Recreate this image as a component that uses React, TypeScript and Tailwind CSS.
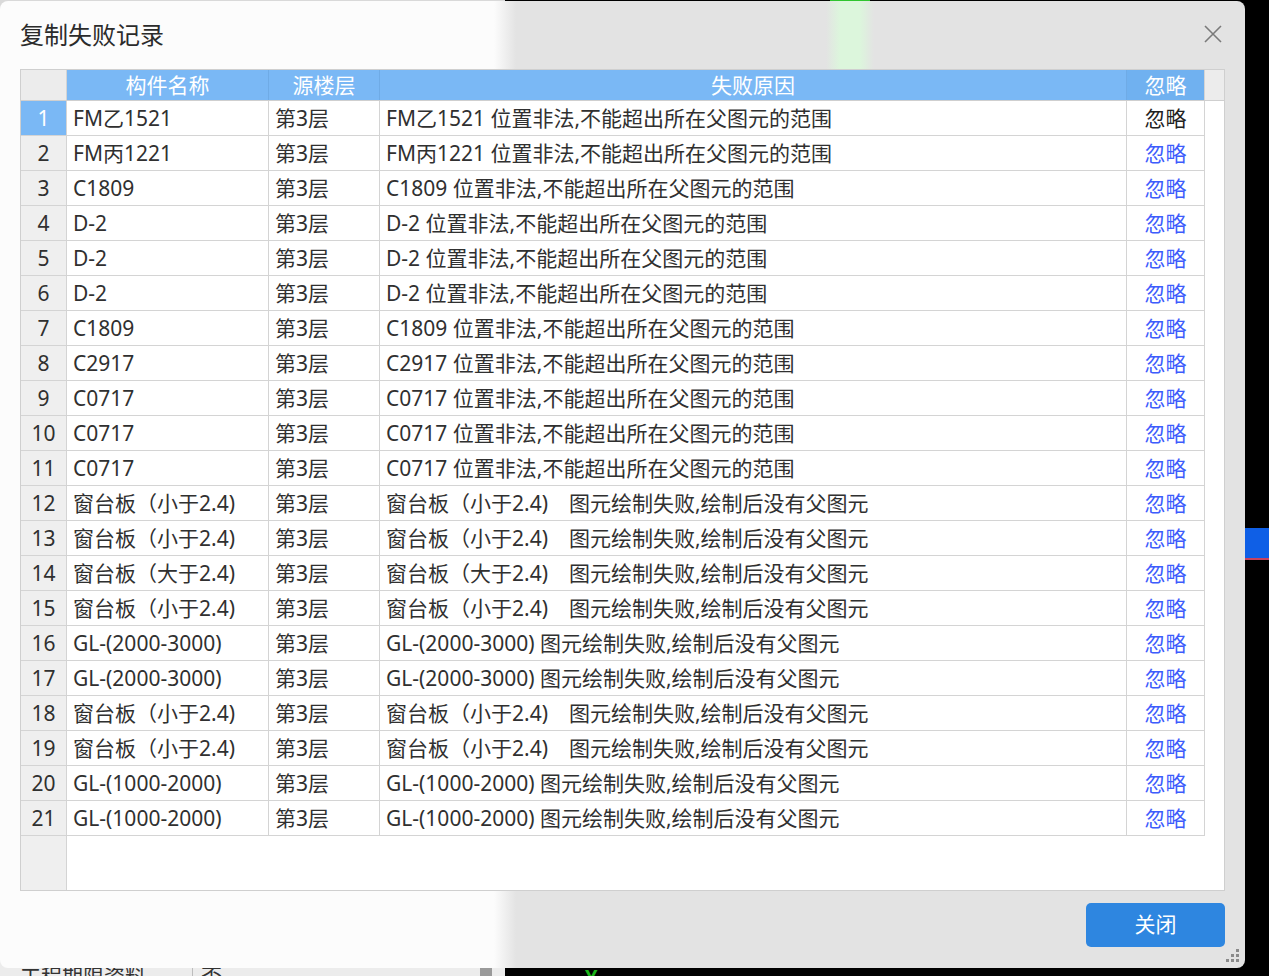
import React from "react";

// name, reason  (floor is always 第3层)
const rows: [string, string][] = [
  ["FM乙1521", "FM乙1521 位置非法,不能超出所在父图元的范围"],
  ["FM丙1221", "FM丙1221 位置非法,不能超出所在父图元的范围"],
  ["C1809", "C1809 位置非法,不能超出所在父图元的范围"],
  ["D-2", "D-2 位置非法,不能超出所在父图元的范围"],
  ["D-2", "D-2 位置非法,不能超出所在父图元的范围"],
  ["D-2", "D-2 位置非法,不能超出所在父图元的范围"],
  ["C1809", "C1809 位置非法,不能超出所在父图元的范围"],
  ["C2917", "C2917 位置非法,不能超出所在父图元的范围"],
  ["C0717", "C0717 位置非法,不能超出所在父图元的范围"],
  ["C0717", "C0717 位置非法,不能超出所在父图元的范围"],
  ["C0717", "C0717 位置非法,不能超出所在父图元的范围"],
  ["窗台板（小于2.4)", "窗台板（小于2.4)　图元绘制失败,绘制后没有父图元"],
  ["窗台板（小于2.4)", "窗台板（小于2.4)　图元绘制失败,绘制后没有父图元"],
  ["窗台板（大于2.4)", "窗台板（大于2.4)　图元绘制失败,绘制后没有父图元"],
  ["窗台板（小于2.4)", "窗台板（小于2.4)　图元绘制失败,绘制后没有父图元"],
  ["GL-(2000-3000)", "GL-(2000-3000) 图元绘制失败,绘制后没有父图元"],
  ["GL-(2000-3000)", "GL-(2000-3000) 图元绘制失败,绘制后没有父图元"],
  ["窗台板（小于2.4)", "窗台板（小于2.4)　图元绘制失败,绘制后没有父图元"],
  ["窗台板（小于2.4)", "窗台板（小于2.4)　图元绘制失败,绘制后没有父图元"],
  ["GL-(1000-2000)", "GL-(1000-2000) 图元绘制失败,绘制后没有父图元"],
  ["GL-(1000-2000)", "GL-(1000-2000) 图元绘制失败,绘制后没有父图元"],
];

const cols = "grid grid-cols-[46px_202px_111px_747px_78px]";

function CloseIcon() {
  return (
    <svg width="20" height="20" viewBox="0 0 20 20" fill="none">
      <path d="M2 2 L18 18 M18 2 L2 18" stroke="#7a7a7a" strokeWidth="1.6" />
    </svg>
  );
}

function Grip() {
  return (
    <svg width="14" height="14" viewBox="0 0 14 14" fill="#8a8a8a">
      <rect x="10" y="0" width="3" height="3" />
      <rect x="5" y="5" width="3" height="3" />
      <rect x="10" y="5" width="3" height="3" />
      <rect x="0" y="10" width="3" height="3" />
      <rect x="5" y="10" width="3" height="3" />
      <rect x="10" y="10" width="3" height="3" />
    </svg>
  );
}

export default function App() {
  return (
    <div className="relative h-[976px] w-[1269px] overflow-hidden bg-black font-['Noto_Sans','Noto_Sans_CJK_SC',sans-serif] text-[#303030]">
      {/* app behind the dialog */}
      <div className="absolute left-0 top-0 h-full w-[505px] bg-[#d9d9d9]" />
      <div className="absolute left-[830px] top-0 h-[2px] w-[40px] bg-[#2fc42f]" />
      <div className="absolute left-0 top-[956px] flex h-[40px] w-[505px] bg-[#ececec] text-[21px] leading-[40px] text-[#333]">
        <div className="w-[193px] border-r border-[#bdbdbd] pl-5">工程期限资料</div>
        <div className="w-[287px] pl-2">否</div>
        <div className="w-[12px] bg-[#9a9a9a]" />
      </div>
      <div className="absolute left-[585px] top-[962px] text-[20px] font-bold text-[#19b319]">Y</div>
      <div className="absolute left-[1245px] top-[528px] h-[32px] w-[24px] border-b-2 border-[#c8425e] bg-[#0f5fe6]" />

      {/* dialog */}
      <div className="absolute left-0 top-px flex h-[967px] w-[1245px] flex-col overflow-hidden rounded-lg bg-[linear-gradient(to_right,#fcfcfc_494px,#e3e3e3_516px)] px-5">
        <div className="pointer-events-none absolute left-[826px] top-0 h-[68px] w-[48px] bg-[linear-gradient(to_right,transparent,#dcf6dc_30%,#dcf6dc_70%,transparent)]" />
        <div className="relative flex h-[68px] items-center justify-between">
          <span className="text-[24px] leading-none text-[#2b2b2b]">复制失败记录</span>
          <span className="mr-[2px] mt-[-2px]">
            <CloseIcon />
          </span>
        </div>

        <div className="relative flex h-[822px] flex-col border border-[#cfcfcf] bg-white text-[21px] leading-none">
          {/* header */}
          <div className="flex h-[31px] border-b border-[#cfcfcf] bg-[#ececec]">
            <div className={cols + " text-white"}>
              <div className="border-r border-[#d4d4d4] bg-[#ececec]" />
              <div className="flex items-center justify-center border-r border-[#6fabe6] bg-[#7ab8f5]">构件名称</div>
              <div className="flex items-center justify-center border-r border-[#6fabe6] bg-[#7ab8f5]">源楼层</div>
              <div className="flex items-center justify-center border-r border-[#6fabe6] bg-[#7ab8f5]">失败原因</div>
              <div className="flex items-center justify-center border-r border-[#d4d4d4] bg-[#70b1f0]">忽略</div>
            </div>
          </div>

          {/* rows */}
          {rows.map(([name, reason], i) => (
            <div key={i} className={cols + " h-[35px]"}>
              <div
                className={
                  "flex items-center justify-center border-b border-r border-[#d4d4d4] " +
                  (i === 0 ? "bg-[#7ab8f5] text-white" : "bg-[#efefef]")
                }
              >
                {i + 1}
              </div>
              <div className="flex items-center whitespace-nowrap border-b border-r border-[#d4d4d4] pl-[6px]">{name}</div>
              <div className="flex items-center border-b border-r border-[#d4d4d4] pl-[6px]">第3层</div>
              <div className="flex items-center whitespace-nowrap border-b border-r border-[#d4d4d4] pl-[6px]">{reason}</div>
              <div
                className={
                  "flex items-center justify-center border-b border-r border-[#d4d4d4] " +
                  (i === 0 ? "text-[#222]" : "text-[#3d5cfc]")
                }
              >
                忽略
              </div>
            </div>
          ))}

          {/* empty area */}
          <div className="flex flex-1">
            <div className="w-[46px] border-r border-[#d4d4d4] bg-[#efefef]" />
          </div>
        </div>

        <div className="mt-3 flex justify-end">
          <button className="flex h-[44px] w-[139px] items-center justify-center rounded-[5px] bg-[#2e86e0] text-[21px] text-white">
            关闭
          </button>
        </div>

        <div className="absolute bottom-[5px] right-[5px]">
          <Grip />
        </div>
      </div>
    </div>
  );
}
